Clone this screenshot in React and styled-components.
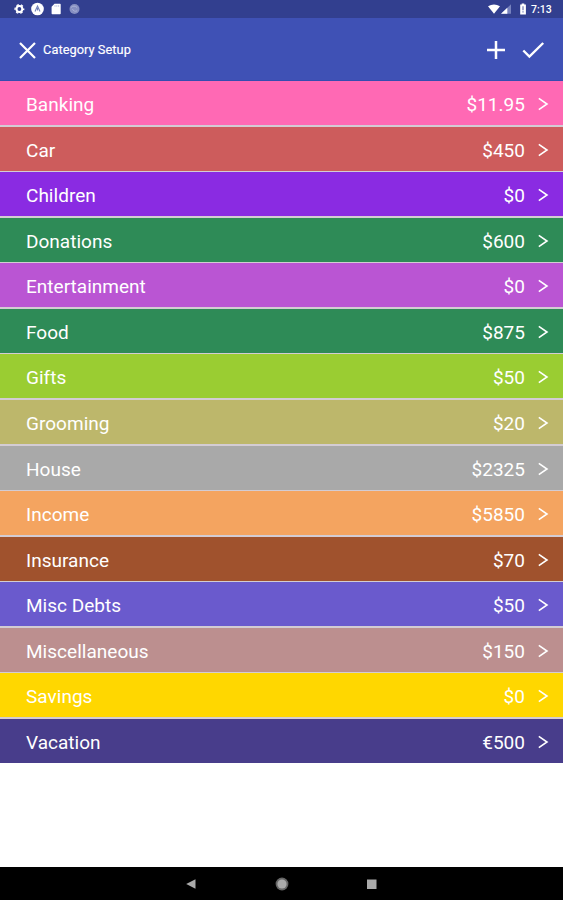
import React from "react";
import styled, { createGlobalStyle } from "styled-components";

const GlobalStyle = createGlobalStyle`
  * { box-sizing: border-box; }
  body { margin: 0; background: #fff; }
`;

const Screen = styled.div`
  display: flex;
  flex-direction: column;
  width: 563px;
  height: 900px;
  overflow: hidden;
  background: #fff;
  color: #fff;
  font-family: Roboto, "Liberation Sans", sans-serif;
`;

const StatusBar = styled.header`
  display: flex;
  flex: none;
  justify-content: space-between;
  height: 18px;
  padding: 0 11px 0 13px;
  background: #323f8f;
`;

const StatusGroup = styled.div`
  display: flex;
  align-items: center;
  height: 18px;
  gap: ${(p) => p.$gap}px;
`;

const Clock = styled.span`
  margin-left: 2px;
  font-size: 10.5px;
  font-weight: 500;
  line-height: 19px;
  width: 21px;
  white-space: nowrap;
`;

const AppBar = styled.nav`
  display: flex;
  flex: none;
  align-items: center;
  height: 63px;
  padding: 2px 18px 0 17px;
  background: #3f51b5;
  border-bottom: 1px solid #364db0;
`;

const Title = styled.h1`
  flex: 1;
  margin: 0 0 0 5px;
  font-size: 12.8px;
  font-weight: 400;
  line-height: 20px;
  letter-spacing: 0.05px;
  -webkit-text-stroke: 0.15px #fff;
`;

const IconButton = styled.button`
  display: flex;
  margin: 0 0 0 ${(p) => p.$left || 0}px;
  padding: 0;
  border: 0;
  background: none;
  color: inherit;
`;

const List = styled.ul`
  display: grid;
  flex: none;
  grid-template-rows: repeat(15, 44.1px);
  row-gap: 1.48px;
  margin: 0;
  padding: 0;
  list-style: none;
  background: #d3ccd3;
`;

const Row = styled.li`
  display: flex;
  align-items: center;
  padding: 2px 14px 0 26px;
  background: ${(p) => p.$color};
  font-size: 19px;
  line-height: 24px;
  letter-spacing: 0.02px;
`;

const Name = styled.span`
  flex: 1;
  padding-top: 2px;
`;

const Amount = styled.span`
  padding-top: 2px;
  margin-right: 13px;
`;

const Spacer = styled.div`
  flex: 1;
`;

const NavBar = styled.footer`
  display: flex;
  flex: none;
  align-items: center;
  justify-content: center;
  gap: 78px;
  height: 33px;
  padding-right: 2px;
  background: #000;
`;

const categories = [
  ["Banking", "$11.95", "#ff69b4"],
  ["Car", "$450", "#cd5c5c"],
  ["Children", "$0", "#8a2be2"],
  ["Donations", "$600", "#2e8b57"],
  ["Entertainment", "$0", "#ba55d3"],
  ["Food", "$875", "#2e8b57"],
  ["Gifts", "$50", "#9acd32"],
  ["Grooming", "$20", "#bdb76b"],
  ["House", "$2325", "#a9a9a9"],
  ["Income", "$5850", "#f4a460"],
  ["Insurance", "$70", "#a0522d"],
  ["Misc Debts", "$50", "#6a5acd"],
  ["Miscellaneous", "$150", "#bc8f8f"],
  ["Savings", "$0", "#ffd700"],
  ["Vacation", "€500", "#483d8b"],
];

const Chevron = () => (
  <svg width="11" height="14" viewBox="0 0 11 14" fill="none" stroke="#fff" strokeWidth="1.6">
    <path d="M.8 1.4 9 7 .8 12.6" />
  </svg>
);

export default function App() {
  return (
    <Screen>
      <GlobalStyle />
      <StatusBar>
        <StatusGroup $gap={6}>
          <svg width="12" height="12" viewBox="0 0 12 12" fill="none" stroke="#fff">
            <circle cx="6.4" cy="6" r="2.9" strokeWidth="2" />
            <circle cx="6.4" cy="6" r="4.3" strokeWidth="1.4" strokeDasharray="2.3 2.2" strokeDashoffset="1.2" />
          </svg>
          <svg width="13" height="14" viewBox="0 0 13 14">
            <circle cx="6.5" cy="7" r="6.3" fill="#fff" />
            <path d="M4 9.5 6.5 4 9 9.5M6.5 6v2.5" fill="none" stroke="#7180b9" strokeWidth="1.1" />
          </svg>
          <svg width="12" height="12" viewBox="0 0 12 12">
            <path d="M4.5.8H10a.7.7 0 0 1 .7.7v9a.7.7 0 0 1-.7.7H2.3a.7.7 0 0 1-.7-.7V3.7Z" fill="#fff" />
            <path d="M5 2.2v1.6M6.8 2.2v1.6M8.6 2.2v1.6" stroke="#a6add2" strokeWidth=".7" />
          </svg>
          <svg width="12" height="12" viewBox="0 0 12 12">
            <circle cx="6.5" cy="6" r="5" fill="#8790c2" />
            <path d="M3 4.5a4 4 0 0 1 6 0M4.5 6a3 3 0 0 0 4.5 1.8" fill="none" stroke="#aab1d6" />
          </svg>
        </StatusGroup>
        <StatusGroup $gap={1}>
          <svg width="12" height="10" viewBox="0 0 12 10">
            <path d="M0 2.2Q6-1.4 12 2.2L6 9.7Z" fill="#fff" />
          </svg>
          <svg width="11" height="10" viewBox="0 0 11 10">
            <path d="M0 9.8 10 .3v9.5Z" fill="#7782bd" />
            <path d="M0 9.8 6.3 3.8v6Z" fill="#fff" />
          </svg>
          <svg width="15" height="12" viewBox="0 0 15 12">
            <path d="M7.2 1.5h1.5V.5h2.6v1h1.6v10H7.2Z" fill="#fff" />
            <path d="M10 3.2v4M10 8.2v1.4" stroke="#6c77b5" strokeWidth="1.2" />
          </svg>
          <Clock>7:13</Clock>
        </StatusGroup>
      </StatusBar>
      <AppBar>
        <IconButton aria-label="Close">
          <svg width="21" height="21" viewBox="0 0 21 21" stroke="#fff" strokeWidth="2.2">
            <path d="M3 3 18 18M18 3 3 18" />
          </svg>
        </IconButton>
        <Title>Category Setup</Title>
        <IconButton aria-label="Add category">
          <svg width="20" height="20" viewBox="0 0 20 20" stroke="#fff" strokeWidth="2.5">
            <path d="M10 1v18M1 10h18" />
          </svg>
        </IconButton>
        <IconButton aria-label="Confirm" $left={16}>
          <svg width="23" height="20" viewBox="0 0 23 20" fill="none" stroke="#fff" strokeWidth="2.4">
            <path d="M1.3 10.5 7.4 16.5 21.2 3" />
          </svg>
        </IconButton>
      </AppBar>
      <List>
        {categories.map(([name, amount, color]) => (
          <Row key={name} $color={color}>
            <Name>{name}</Name>
            <Amount>{amount}</Amount>
            <Chevron />
          </Row>
        ))}
      </List>
      <Spacer />
      <NavBar>
        <svg width="12" height="12" viewBox="0 0 12 12" fill="#aaa">
          <path d="M1.2 6 10.5 1.2v9.6Z" />
        </svg>
        <svg width="14" height="14" viewBox="0 0 14 14">
          <circle cx="7" cy="7" r="6.4" fill="#666" />
          <circle cx="7" cy="7" r="4.6" fill="#aaa" />
        </svg>
        <svg width="10" height="10" viewBox="0 0 10 10" fill="#aaa">
          <path d="M0 .5h9.5V10H0Z" />
        </svg>
      </NavBar>
    </Screen>
  );
}
